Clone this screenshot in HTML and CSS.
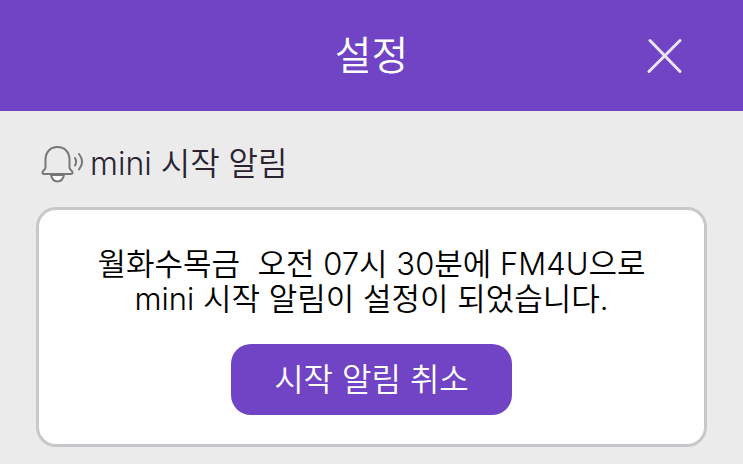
FILE: index.html
```html
<!DOCTYPE html>
<html lang="ko">
<head>
<meta charset="utf-8">
<meta name="viewport" content="width=device-width, initial-scale=1">
<title>설정</title>
<link rel="stylesheet" href="styles.css">
</head>
<body>
<header class="topbar">
  <h1 class="title">설정</h1>
  <button class="close" type="button" aria-label="닫기">
    <svg width="36" height="36" viewBox="0 0 36 36" fill="none" stroke="#ebe6f4" stroke-width="3" stroke-linecap="round"><path d="M3 2.500 33 33.500M33 2.500 2 33.500"/></svg>
  </button>
</header>
<main class="content">
  <h2 class="section-title">
    <svg class="bell" width="43" height="38" viewBox="0 0 43 38" fill="none" stroke="#777" stroke-width="2" stroke-linecap="round" stroke-linejoin="round">
      <path d="M10 30c1 4.500 3 6.500 6.500 6.500S22 34.500 23 30z" fill="#fff"/>
      <path d="M4.500 22.500V14.500C4.500 7 9.500 2 16.500 2S28.500 7 28.500 14.500v8c0 2.500 3 3 3 5 0 1-.8 1.500-1.800 1.500H3.300c-1 0-1.800-.5-1.800-1.500 0-2 3-2.500 3-5z" fill="#ebebeb"/>
      <path d="M34 13c1.500 2.500 1.500 5 0 7.500M38 9c4 5 4 10.500 0 15.500"/>
    </svg>
    <span>mini 시작 알림</span>
  </h2>
  <section class="card">
    <p class="message">월화수목금&nbsp; 오전 07시 30분에 FM4U으로<br>mini 시작 알림이 설정이 되었습니다.</p>
    <button class="cancel" type="button">시작 알림 취소</button>
  </section>
</main>
</body>
</html>
```
FILE: styles.css
```css
* {
  box-sizing: border-box;
}

body {
  margin: 0;
  background: #ebebeb;
  color: #000;
  font-family: Inter, "Noto Sans CJK KR", sans-serif;
  font-weight: 350;
}

button {
  border: 0;
  padding: 0;
  font: inherit;
  cursor: pointer;
}

.topbar {
  display: grid;
  grid-template-columns: 1fr auto 1fr;
  align-items: center;
  padding: 28px 60px 27px;
  background: #7044c4;
  color: #fff;
}

.title {
  grid-column: 2;
  margin: 0;
  font-size: 40px;
  font-weight: 350;
  line-height: 56px;
}

.close {
  justify-self: end;
  display: flex;
  background: none;
}

.content {
  padding: 32px 36px 17px;
}

.section-title {
  display: flex;
  align-items: center;
  gap: 6px;
  margin: 0;
  padding-left: 5px;
  color: #292331;
  font-size: 32px;
  font-weight: 350;
  line-height: 42px;
}

.card {
  display: flex;
  flex-direction: column;
  align-items: center;
  gap: 28px;
  margin-top: 22px;
  padding: 36px 24px 29px;
  border: 3px solid #c8c8cc;
  border-radius: 20px;
  background: #fff;
}

.message {
  margin: 0;
  font-size: 31px;
  line-height: 35px;
  text-align: center;
}

.cancel {
  padding: 15px 43px 14px;
  border-radius: 20px;
  background: #7044c4;
  color: #fff;
  font-size: 32px;
  line-height: 42px;
}
```
